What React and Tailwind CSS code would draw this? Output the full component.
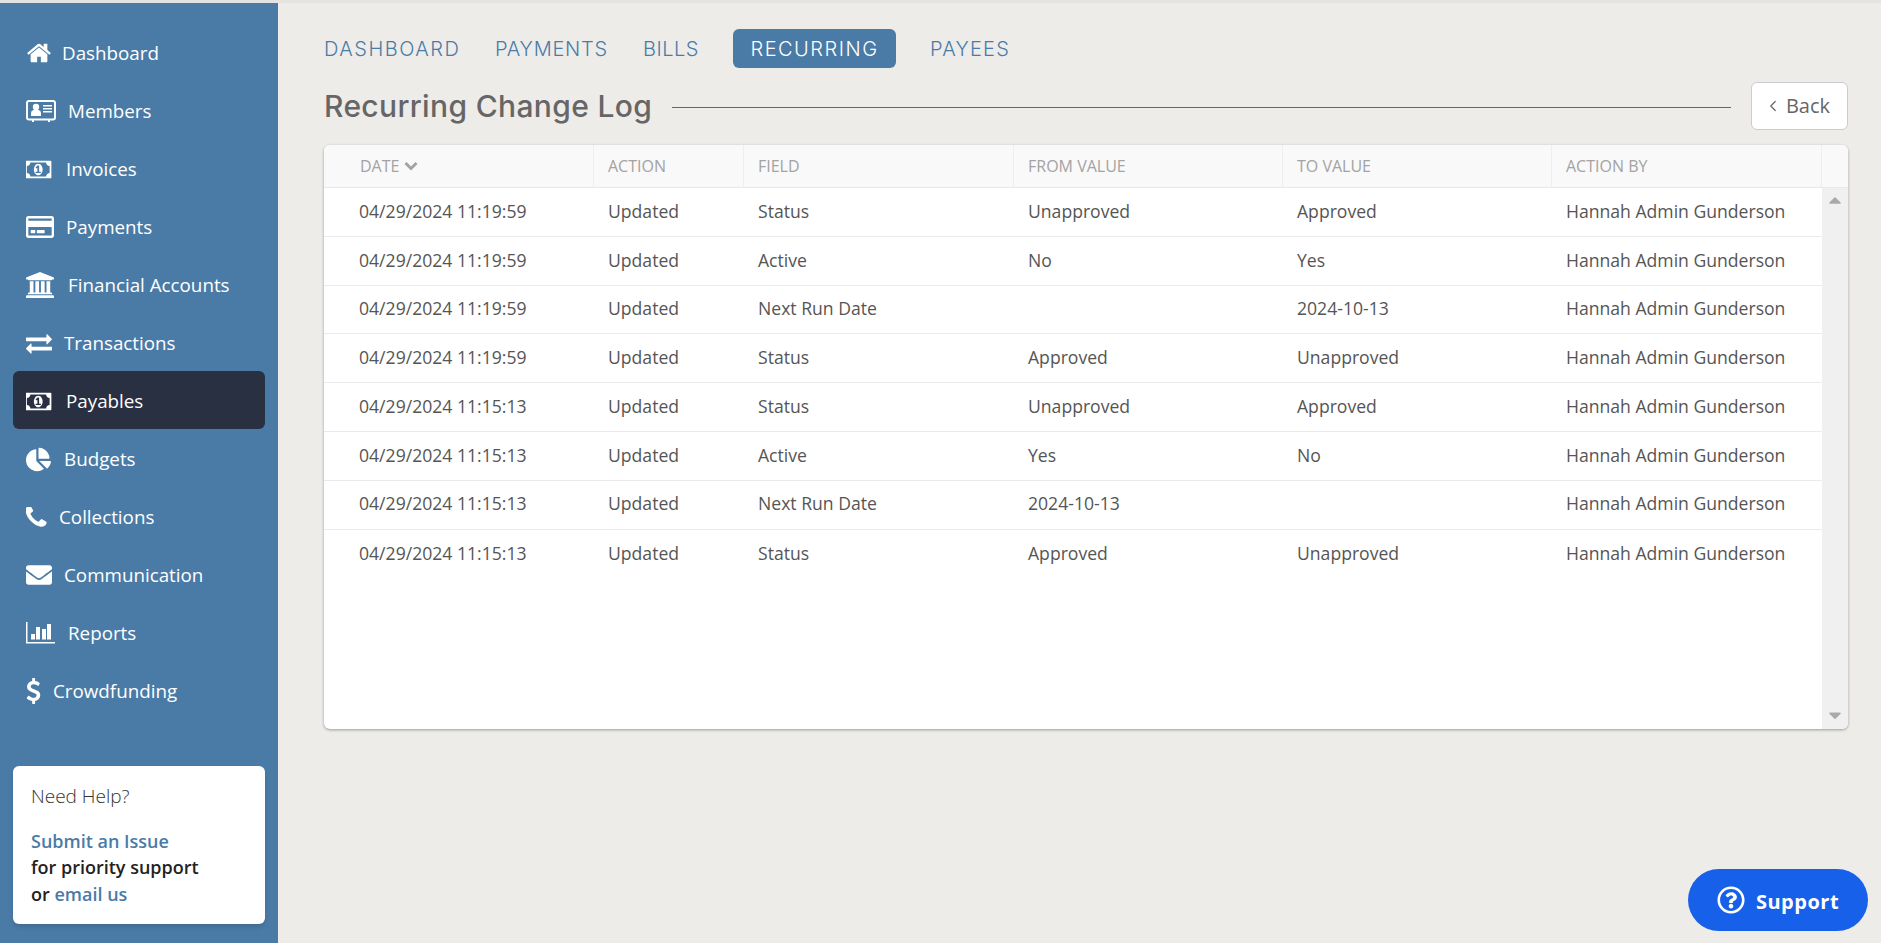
import { ChevronLeft } from "lucide-react";
import { FaRegCreditCard, FaChartPie, FaEnvelope, FaCaretUp, FaCaretDown, FaRegQuestionCircle } from "react-icons/fa";

const Glyph = ({ w, h, box, d }) => (
  <svg width={w} height={h} viewBox={box} fill="#fff">
    <path d={d} />
  </svg>
);

const homePath = "M1472 992v480q0 26-19 45t-45 19h-384v-384h-256v384h-384q-26 0-45-19t-19-45v-480q0-1 .5-3t.5-3l575-474 575 474q1 2 1 6zm223-69l-62 74q-8 9-21 11h-3q-13 0-21-7l-692-577-692 577q-12 8-24 7-13-2-21-11l-62-74q-8-10-7-23.5t11-21.5l719-599q32-26 76-26t76 26l244 204v-195q0-14 9-23t23-9h192q14 0 23 9t9 23v408l219 182q10 8 11 21.5t-7 23.5z";
const moneyPath = "M704 1152h384v-96h-128v-448h-114l-148 137 77 80q42-37 55-57h2v288h-128v96zm512-256q0 70-21 142t-59.5 134-101.5 101-138 39-138-39-101.5-101-59.5-134-21-142 21-142 59.5-134 101.5-101 138-39 138 39 101.5 101 59.5 134 21 142zm512 256v-512q-106 0-181-75t-75-181h-1152q0 106-75 181t-181 75v512q106 0 181 75t75 181h1152q0-106 75-181t181-75zm128-832v1152q0 26-19 45t-45 19h-1792q-26 0-45-19t-19-45v-1152q0-26 19-45t45-19h1792q26 0 45 19t19 45z";
const bankPath = "M960 0l960 384v128h-128q0 26-20.5 45t-48.5 19h-1526q-28 0-48.5-19t-20.5-45h-128v-128zm-704 640h256v768h128v-768h256v768h128v-768h256v768h128v-768h256v768h59q28 0 48.5 19t20.5 45v64h-1664v-64q0-26 20.5-45t48.5-19h59v-768zm1595 960q28 0 48.5 19t20.5 45v128h-1920v-128q0-26 20.5-45t48.5-19h1782z";
const exchangePath = "M1792 1184v192q0 13-9.5 22.5t-22.5 9.5h-1376v192q0 13-9.5 22.5t-22.5 9.5q-12 0-24-10l-319-320q-9-9-9-22 0-14 9-23l320-320q9-9 23-9 13 0 22.5 9.5t9.5 22.5v192h1376q13 0 22.5 9.5t9.5 22.5zm0-544q0 14-9 23l-320 320q-9 9-23 9-13 0-22.5-9.5t-9.5-22.5v-192h-1376q-13 0-22.5-9.5t-9.5-22.5v-192q0-13 9.5-22.5t22.5-9.5h1376v-192q0-14 9-23t23-9q12 0 24 10l319 319q9 9 9 23z";
const phonePath = "M1600 1240q0 27-10 70.5t-21 68.5q-21 50-122 106-94 51-186 51-27 0-53-3.5t-57.5-12.5-47-14.5-55.5-20.5-49-18q-98-35-175-83-127-79-264-216t-216-264q-48-77-83-175-3-9-18-49t-20.5-55.5-14.5-47-12.5-57.5-3.5-53q0-92 51-186 56-101 106-122 25-11 68.5-21t70.5-10q14 0 21 3 18 6 53 76 11 19 30 54t35 63.5 31 53.5q3 4 17.5 25t21.5 35.5 7 28.5q0 20-28.5 50t-62 55-62 53-28.5 46q0 9 5 22.5t8.5 20.5 14 24 11.5 19q76 137 174 235t235 174q2 1 19 11.5t24 14 20.5 8.5 22.5 5q18 0 46-28.5t53-62 55-62 50-28.5q14 0 28.5 7t35.5 21.5 25 17.5q25 15 53.5 31t63.5 35 54 30q70 35 76 53 3 7 3 21z";
const dollarPath = "M978 1185q0 153-99.5 263.5t-258.5 136.5v175q0 14-9 23t-23 9h-135q-13 0-22.5-9.5t-9.5-22.5v-175q-66-9-127.5-31t-101.5-44.5-74-48-46.5-37.5-17.5-18q-17-21-2-41l103-135q7-10 23-12 15-2 24 9l2 2q113 99 243 125 37 8 74 8 81 0 142.5-43t61.5-122q0-28-15-53t-33.5-42-58.5-37.5-66-32-80-32.5q-39-16-61.5-25t-61.5-26.5-62.5-31-56.5-35.5-53.5-42.5-43.5-49-35.5-58-21-66.5-8.5-78q0-138 98-242t255-134v-180q0-13 9.5-22.5t22.5-9.5h135q14 0 23 9t9 23v176q57 6 110.5 23t87 33.5 63.5 37.5 39 29 15 14q17 18 5 38l-81 146q-8 15-23 16-14 3-27-7-3-3-14.5-12t-39-26.5-58.5-32-74.5-26-85.5-11.5q-95 0-155 43t-60 111q0 26 8.5 48t29.5 41.5 39.5 33 56 31 60.5 27 70 27.5q53 20 81 31.5t76 35 75.5 42.5 62 50 53 63.5 31.5 76.5 13 94z";

const MembersIcon = () => (
  <svg width="30" height="22" viewBox="0 0 30 22" fill="#fff">
    <rect x="1" y="1" width="28" height="18.5" rx="2" fill="none" stroke="#fff" strokeWidth="2" />
    <rect x="6" y="19" width="2" height="3" />
    <rect x="22" y="19" width="2" height="3" />
    <circle cx="10" cy="7" r="3.2" />
    <path d="M5 16v-3q0-2.500 2.500-3h5q2.500.5 2.500 3v3z" />
    <path d="M17 5h9v1.500h-9zM17 8h9v1.500h-9zM17 11h9v1.500h-9z" />
  </svg>
);

const ReportsIcon = () => (
  <svg width="30" height="22" viewBox="0 0 30 22" fill="#fff">
    <path d="M0 0h1.500v20h27.500v1.500H0z" />
    <path d="M5 12h4v5.500H5zM10 5h4v12.500h-4zM16 7h4v10.500h-4zM21 2h4v15.500h-4z" />
  </svg>
);

const navItems = [
  { label: "Dashboard", icon: <Glyph w={26} h={26} box="0 0 1792 1792" d={homePath} />, box: "w-[36px]" },
  { label: "Members", icon: <MembersIcon />, box: "w-[42px]" },
  { label: "Invoices", icon: <Glyph w={28} h={25} box="0 0 2048 1792" d={moneyPath} />, box: "w-[40px]" },
  { label: "Payments", icon: <FaRegCreditCard size={28} />, box: "w-[40px]" },
  { label: "Financial Accounts", icon: <Glyph w={28} h={26} box="0 0 1920 1792" d={bankPath} />, box: "w-[42px]" },
  { label: "Transactions", icon: <Glyph w={26} h={26} box="0 0 1792 1792" d={exchangePath} />, box: "w-[38px]" },
  { label: "Payables", icon: <Glyph w={28} h={25} box="0 0 2048 1792" d={moneyPath} />, box: "w-[40px]", active: true },
  { label: "Budgets", icon: <FaChartPie size={25} />, box: "w-[38px]" },
  { label: "Collections", icon: <Glyph w={21} h={21} box="224 224 1400 1400" d={phonePath} />, box: "w-[33px]" },
  { label: "Communication", icon: <FaEnvelope size={26} />, box: "w-[38px]" },
  { label: "Reports", icon: <ReportsIcon />, box: "w-[42px]" },
  { label: "Crowdfunding", icon: <Glyph w={15} h={26} box="0 0 1024 1792" d={dollarPath} />, box: "w-[27px]" },
];

const rows = [
  ["04/29/2024 11:19:59", "Updated", "Status", "Unapproved", "Approved"],
  ["04/29/2024 11:19:59", "Updated", "Active", "No", "Yes"],
  ["04/29/2024 11:19:59", "Updated", "Next Run Date", "", "2024-10-13"],
  ["04/29/2024 11:19:59", "Updated", "Status", "Approved", "Unapproved"],
  ["04/29/2024 11:15:13", "Updated", "Status", "Unapproved", "Approved"],
  ["04/29/2024 11:15:13", "Updated", "Active", "Yes", "No"],
  ["04/29/2024 11:15:13", "Updated", "Next Run Date", "2024-10-13", ""],
  ["04/29/2024 11:15:13", "Updated", "Status", "Approved", "Unapproved"],
];

const headers = ["ACTION", "FIELD", "FROM VALUE", "TO VALUE", "ACTION BY"];
const gridCols = "grid grid-cols-[270px_150px_270px_269px_269px_270px]";

const Sidebar = () => (
  <aside className="w-[278px] shrink-0 bg-[#4a7ba6] flex flex-col px-[13px] pt-[20px] pb-[19px]">
    <nav className="flex flex-col">
      {navItems.map((item) => (
        <a
          key={item.label}
          className={`flex items-center h-[58px] pl-[13px] pt-[2px] rounded-md text-white text-[18.8px] ${item.active ? "bg-[#293042]" : ""}`}
        >
          <span className={`flex items-center shrink-0 ${item.box}`}>{item.icon}</span>
          {item.label}
        </a>
      ))}
    </nav>
    <div className="mt-auto h-[158px] bg-white rounded-md shadow-md pl-[18px] pt-[17px] text-[18px]">
      <p className="font-light text-[19px] text-[#333] leading-[26px]">Need Help?</p>
      <p className="mt-[19px] font-semibold text-[#222] leading-[26.4px]">
        <span className="text-[#4a7ba6]">Submit an Issue</span>
        <br />
        for priority support
        <br />
        or <span className="text-[#4a7ba6]">email us</span>
      </p>
    </div>
  </aside>
);

const ChangeLogTable = () => (
  <div className="bg-white rounded-md shadow-[0_1px_3px_rgba(0,0,0,0.35)] h-[584px] overflow-hidden flex flex-col">
    <div className={`${gridCols} bg-[#f9f9f9] border-b border-[#e8e8e8] h-[43px] text-[16px] text-[#a3a3a3]`}>
      <div className="flex items-center gap-[5px] pl-[36px] border-r border-[#eee]">
        DATE
        <svg width="14" height="10" viewBox="0 0 14 10" fill="none" stroke="#a3a3a3" strokeWidth="3">
          <path d="M1.500 2 7 7.500 12.500 2" />
        </svg>
      </div>
      {headers.map((h) => (
        <div key={h} className="flex items-center pl-[14px] border-r border-[#eee]">{h}</div>
      ))}
    </div>
    <div className="flex flex-1">
      <div className="w-[1498px]">
        {rows.map((row, i) => (
          <div key={i} className={`${gridCols} h-[48.8px] pb-[2px] border-b last:border-b-0 border-[#e8ebee] text-[17.6px] text-[#555] items-center`}>
            <div className="pl-[35px]">{row[0]}</div>
            <div className="pl-[14px]">{row[1]}</div>
            <div className="pl-[14px]">{row[2]}</div>
            <div className="pl-[14px]">{row[3]}</div>
            <div className="pl-[14px]">{row[4]}</div>
            <div className="pl-[14px]">Hannah Admin Gunderson</div>
          </div>
        ))}
      </div>
      <div className="w-[26px] bg-[#f0f0f0] flex flex-col items-center justify-between pt-[2px] pb-[4px] text-[#a9a9a9]">
        <FaCaretUp size={20} />
        <FaCaretDown size={20} />
      </div>
    </div>
  </div>
);

const App = () => (
  <div className="h-[943px] overflow-hidden bg-[#eeece9] flex flex-col font-['Open_Sans',sans-serif]">
    <div className="h-[3px] bg-[#e3e3e1]" />
    <div className="flex flex-1 min-h-0">
      <Sidebar />
      <main className="flex-1 pl-[46px] pr-[33px] pt-[26px] relative">
        <div className="flex items-center h-[39px] font-['Inter',sans-serif] font-light text-[20px] text-[#4a7ba6]">
          <span className="w-[171px] tracking-[1.5px]">DASHBOARD</span>
          <span className="w-[148px] tracking-[0.75px]">PAYMENTS</span>
          <span className="w-[90px] tracking-[0.5px]">BILLS</span>
          <span className="w-[163px] h-[39px] bg-[#4a7ba6] text-white tracking-[1.5px] rounded-md flex items-center justify-center">RECURRING</span>
          <span className="ml-[34px] tracking-[1.2px]">PAYEES</span>
        </div>
        <div className="flex items-center mt-[14px] h-[48px]">
          <h1 className="font-['Inter',sans-serif] font-medium text-[30px] tracking-[0.35px] text-[#666]">Recurring Change Log</h1>
          <div className="flex-1 h-px mt-[2px] bg-[#666] mx-[20px]" />
          <button className="w-[97px] h-[48px] pr-[5px] bg-white border border-[#ccc] rounded-md text-[20px] text-[#666] flex items-center justify-center gap-[4px]">
            <ChevronLeft size={18} strokeWidth={1.6} /> Back
          </button>
        </div>
        <div className="mt-[15px]">
          <ChangeLogTable />
        </div>
        <button className="absolute right-[13px] top-[866px] w-[180px] h-[62px] rounded-full bg-[#1660ea] text-white font-bold text-[20px] tracking-[0.5px] flex items-center justify-center gap-[11px]">
          <FaRegQuestionCircle size={28} />
          <span className="pt-[3px]">Support</span>
        </button>
      </main>
    </div>
  </div>
);

export default App;
